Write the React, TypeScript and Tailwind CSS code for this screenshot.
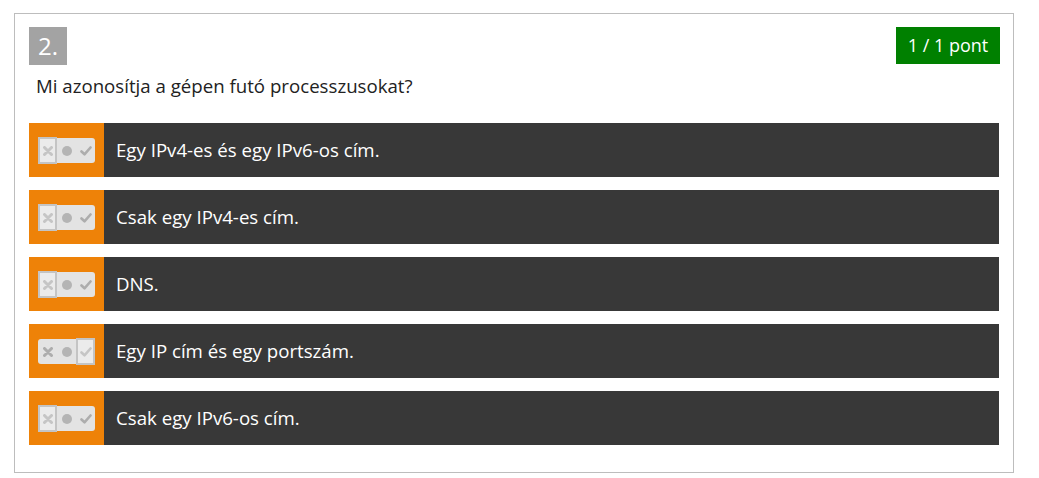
const answers = [
  { text: "Egy IPv4-es és egy IPv6-os cím.", state: "no" },
  { text: "Csak egy IPv4-es cím.", state: "no" },
  { text: "DNS.", state: "no" },
  { text: "Egy IP cím és egy portszám.", state: "yes" },
  { text: "Csak egy IPv6-os cím.", state: "no" },
];

function Toggle({ state }: { state: string }) {
  return (
    <div className="relative flex h-[25px] w-[57px] items-center rounded-[3px] bg-[#e3e3e3]">
      <div className="flex w-[19px] justify-center">
        <svg width="10" height="10" viewBox="0 0 10 10">
          <path d="M1.5 1.5 L8.5 8.5 M8.5 1.5 L1.5 8.5" stroke="#adadad" strokeWidth="3" strokeLinecap="round" />
        </svg>
      </div>
      <div className="flex w-[19px] justify-center">
        <div className="h-[10px] w-[10px] rounded-full bg-[#b4b4b4]" />
      </div>
      <div className="flex w-[19px] justify-center">
        <svg width="12" height="10" viewBox="0 0 12 10">
          <path d="M1.5 5.5 L4.5 8.3 L10.5 1.5" stroke="#adadad" strokeWidth="2.6" fill="none" strokeLinecap="round" strokeLinejoin="round" />
        </svg>
      </div>
      {/* selected segment frame */}
      <div
        className={
          state === "yes"
            ? "absolute right-0 top-[-1px] h-[27px] w-[19px] border-2 border-[#c4c4c4] bg-white/30"
            : "absolute left-0 top-[-1px] h-[27px] w-[19px] border-2 border-[#c4c4c4] bg-white/30"
        }
      />
    </div>
  );
}

export default function App() {
  return (
    <div className="bg-white pl-[14px] pt-[13px] font-['Open_Sans',sans-serif]">
      <div className="w-[1000px] border border-[#bdbdbd] px-[14px] pb-[27px] pt-[13px]">
        {/* header */}
        <div className="flex items-start justify-between">
          <div className="flex h-[38px] w-[38px] items-center justify-center bg-[#a3a3a3] text-[24px] text-white">
            2.
          </div>
          <div className="mr-[-1px] flex h-[37px] w-[104px] items-center justify-center bg-[#008000] text-[18px] text-white">
            1 / 1 pont
          </div>
        </div>

        {/* question */}
        <p className="mt-[7px] pl-[7px] text-[18.67px] leading-[28px] text-[#222]">
          Mi azonosítja a gépen futó processzusokat?
        </p>

        {/* answers */}
        <div className="mt-[23px] flex flex-col gap-[13px]">
          {answers.map((a) => (
            <div key={a.text} className="flex h-[54px] w-[970px] bg-[#383838]">
              <div className="flex w-[75px] items-center justify-center bg-[#ee8208] pt-[1px]">
                <Toggle state={a.state} />
              </div>
              <div className="flex items-center pl-[12px] text-[18.67px] text-white">{a.text}</div>
            </div>
          ))}
        </div>
      </div>
    </div>
  );
}
